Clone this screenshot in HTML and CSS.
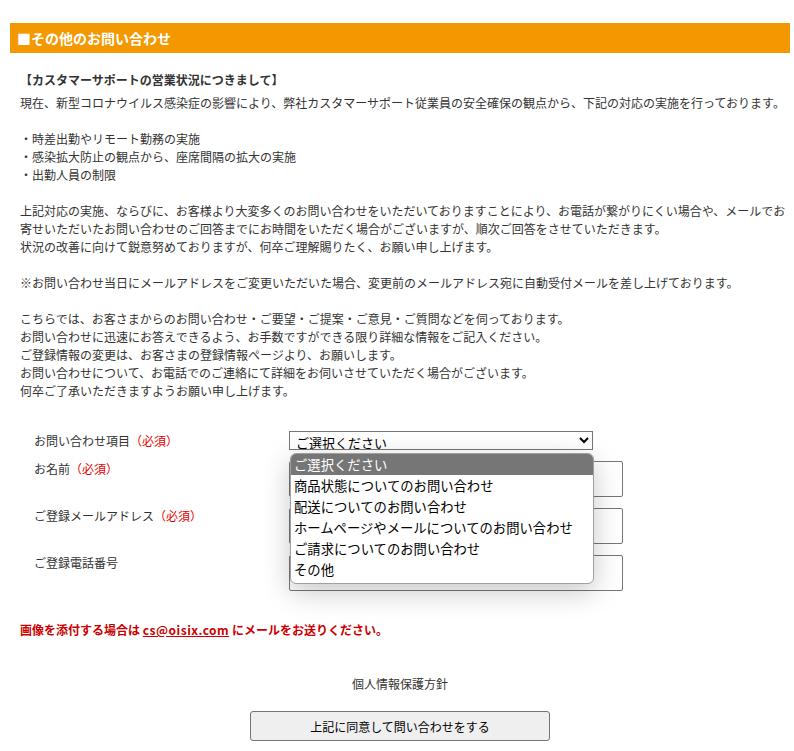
FILE: index.html
```html
<!DOCTYPE html>
<html lang="ja">
<head>
    <meta charset="UTF-8">
    <meta name="viewport" content="width=device-width, initial-scale=1.0">
    <title>その他のお問い合わせ</title>
    <link rel="stylesheet" href="styles.css">
</head>
<body>
    <div class="page">
        <h1 class="title-bar">■その他のお問い合わせ</h1>

        <div class="intro">
            <p class="intro-head">【カスタマーサポートの営業状況につきまして】</p>
            <p class="intro-text">
                現在、新型コロナウイルス感染症の影響により、弊社カスタマーサポート従業員の安全確保の観点から、下記の対応の実施を行っております。<br>
                <br>
                ・時差出勤やリモート勤務の実施<br>
                ・感染拡大防止の観点から、座席間隔の拡大の実施<br>
                ・出勤人員の制限<br>
                <br>
                上記対応の実施、ならびに、お客様より大変多くのお問い合わせをいただいておりますことにより、お電話が繋がりにくい場合や、メールでお<br>
                寄せいただいたお問い合わせのご回答までにお時間をいただく場合がございますが、順次ご回答をさせていただきます。<br>
                状況の改善に向けて鋭意努めておりますが、何卒ご理解賜りたく、お願い申し上げます。<br>
                <br>
                ※お問い合わせ当日にメールアドレスをご変更いただいた場合、変更前のメールアドレス宛に自動受付メールを差し上げております。<br>
                <br>
                こちらでは、お客さまからのお問い合わせ・ご要望・ご提案・ご意見・ご質問などを伺っております。<br>
                お問い合わせに迅速にお答えできるよう、お手数ですができる限り詳細な情報をご記入ください。<br>
                ご登録情報の変更は、お客さまの登録情報ページより、お願いします。<br>
                お問い合わせについて、お電話でのご連絡にて詳細をお伺いさせていただく場合がございます。<br>
                何卒ご了承いただきますようお願い申し上げます。
            </p>
        </div>

        <form class="contact-form">
            <label class="form-label first" for="category">お問い合わせ項目<span class="req">（必須）</span></label>
            <div class="form-field select-wrap">
                <select id="category" class="form-select">
                    <option>ご選択ください</option>
                    <option>商品状態についてのお問い合わせ</option>
                    <option>配送についてのお問い合わせ</option>
                    <option>ホームページやメールについてのお問い合わせ</option>
                    <option>ご請求についてのお問い合わせ</option>
                    <option>その他</option>
                </select>
                <ul class="select-popup">
                    <li class="active">ご選択ください</li>
                    <li>商品状態についてのお問い合わせ</li>
                    <li>配送についてのお問い合わせ</li>
                    <li>ホームページやメールについてのお問い合わせ</li>
                    <li>ご請求についてのお問い合わせ</li>
                    <li>その他</li>
                </ul>
            </div>

            <label class="form-label" for="name">お名前<span class="req">（必須）</span></label>
            <div class="form-field"><input type="text" id="name" class="form-input"></div>

            <label class="form-label" for="mail">ご登録メールアドレス<span class="req">（必須）</span></label>
            <div class="form-field"><input type="text" id="mail" class="form-input"></div>

            <label class="form-label" for="tel">ご登録電話番号</label>
            <div class="form-field"><input type="text" id="tel" class="form-input"></div>
        </form>

        <p class="attach-note">画像を添付する場合は <a href="#">cs@oisix.com</a> にメールをお送りください。</p>

        <p class="privacy">個人情報保護方針</p>

        <div class="submit-row">
            <button type="button" class="submit-button">上記に同意して問い合わせをする</button>
        </div>
    </div>
</body>
</html>
```

FILE: styles.css
```css
body {
    margin: 0;
    font-family: "Noto Sans CJK JP", "Noto Sans", sans-serif;
    font-size: 12px;
    color: #333;
}
.page {
    margin: 23px 4px 0 10px;
}
.title-bar {
    margin: 0;
    height: 30px;
    line-height: 30px;
    padding-left: 7px;
    background-color: #f39800;
    color: #fff;
    font-size: 14px;
    font-weight: bold;
}
.intro {
    padding: 18px 0 0 10px;
}
.intro p {
    margin: 0;
}
.intro-head {
    line-height: 18px;
    font-weight: bold;
    margin-bottom: 5px !important;
}
.intro-text {
    line-height: 18px;
    white-space: nowrap;
}
.contact-form {
    display: grid;
    grid-template-columns: 255px 1fr;
    row-gap: 11px;
    margin-top: 31px;
    padding-left: 24px;
}
.form-label {
    line-height: 16px;
}
.form-label.first {
    line-height: 19px;
}
.req {
    color: #e60000;
}
.form-field {
    position: relative;
}
.form-select {
    display: block;
    width: 304px;
    height: 19px;
    padding: 0 0 0 2px;
    margin: 0;
    border: 1px solid #767676;
    border-radius: 0;
    background: #fff;
    font-family: inherit;
    font-size: 13px;
    line-height: 17px;
    color: #000;
}
.form-input {
    display: block;
    box-sizing: border-box;
    width: 334px;
    height: 36px;
    margin: 0;
    border: 1px solid #767676;
    border-radius: 2px;
    font-family: inherit;
}
.select-popup {
    position: absolute;
    top: 22px;
    left: 1px;
    z-index: 10;
    width: 302px;
    margin: 0;
    padding: 0 0 3px;
    list-style: none;
    background: #fff;
    border: 1px solid #a0a0a0;
    border-radius: 6px;
    box-shadow: 0 8px 28px rgba(0, 0, 0, 0.22);
    overflow: hidden;
    font-size: 13.33px;
    color: #000;
}
.select-popup li {
    height: 21px;
    line-height: 21px;
    padding-left: 3px;
}
.select-popup li.active {
    background: #767676;
    color: #fff;
}
.attach-note {
    margin: 30px 0 0 10px;
    line-height: 18px;
    font-weight: bold;
    color: #cc0000;
}
.attach-note a {
    color: #cc0000;
    text-decoration: underline;
    letter-spacing: 0.5px;
}
.privacy {
    margin: 36px 0 0;
    line-height: 18px;
    text-align: center;
}
.submit-row {
    margin-top: 18px;
    text-align: center;
}
.submit-button {
    width: 300px;
    height: 30px;
    background: #efefef;
    border: 1px solid #767676;
    border-radius: 3px;
    font-family: inherit;
    font-size: 12px;
    color: #000;
}
```
